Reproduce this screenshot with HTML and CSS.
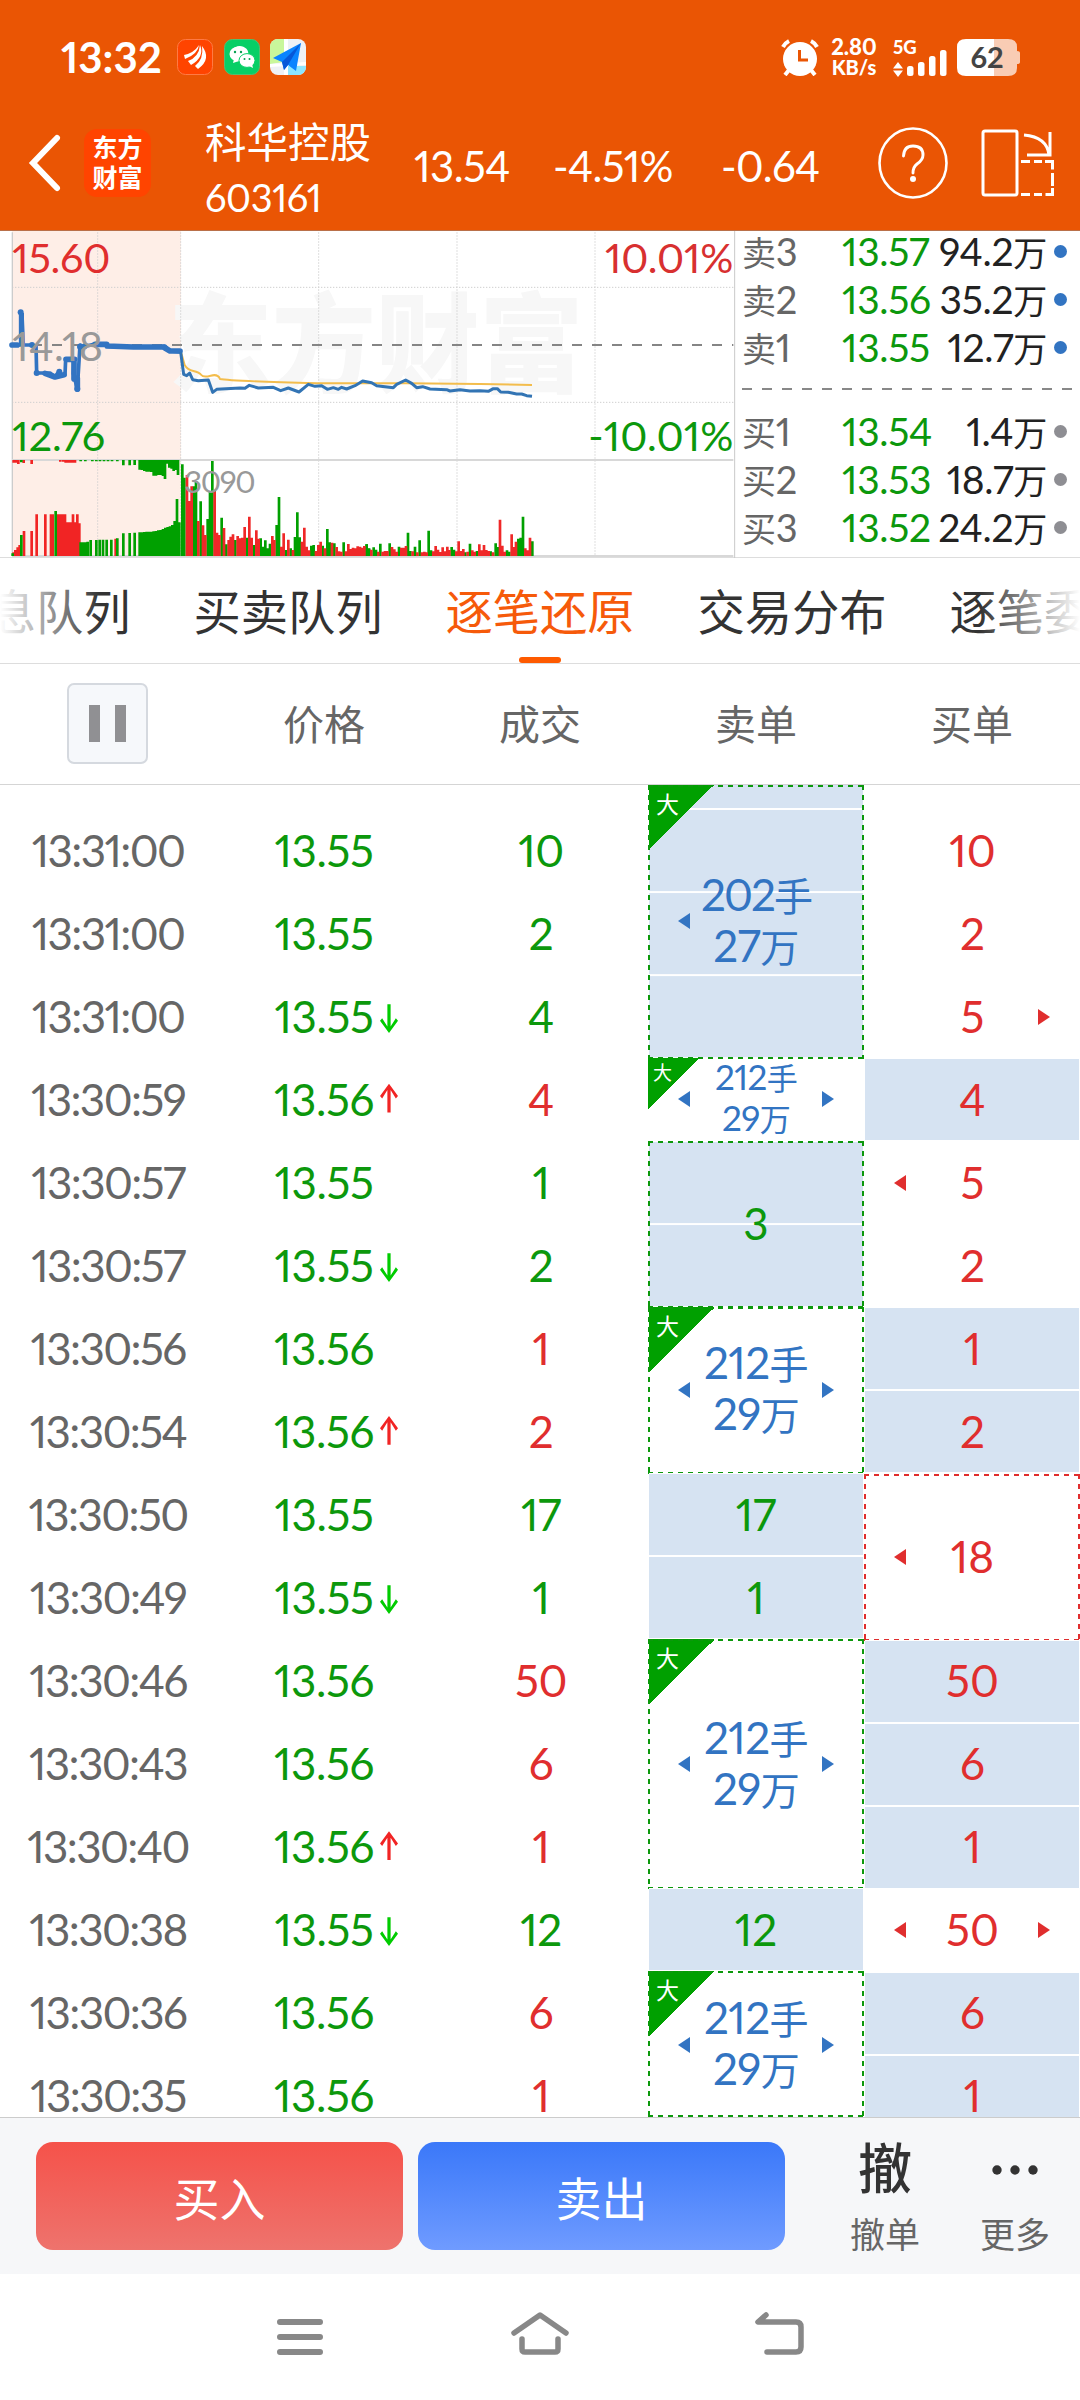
FILE: index.html
```html
<!DOCTYPE html>
<html lang="zh-CN">
<head>
<meta charset="utf-8">
<title>科华控股 603161</title>
<link rel="stylesheet" href="styles.css">
</head>
<body>
<div class="screen">
<header class="top">
  <div class="status">
    <span class="clock">13:32</span>
    <svg class="app" viewBox="0 0 36 36"><rect x=".5" y=".5" width="35" height="35" rx="8" fill="#ff4400" stroke="#ff7a45"/><path d="M7 16Q17 14 22 6Q21 15 8 20ZM11 22Q22 18 23 6Q28 18 14 26ZM18 27Q27 20 25 7Q35 20 21 30Z" fill="#fff"/></svg>
    <svg class="app" viewBox="0 0 36 36"><rect x=".5" y=".5" width="35" height="35" rx="8" fill="#07cf66" stroke="#4fc070"/><path d="M9 24l1-4A8.500 7.500 0 1 1 15 22z" fill="#fff"/><ellipse cx="14" cy="15" rx="8.500" ry="7.300" fill="#fff"/><ellipse cx="23" cy="21.500" rx="8" ry="6.900" fill="#fff" stroke="#07cf66" stroke-width="1"/><path d="M25 27l4 2-1-4z" fill="#fff"/><g fill="#07a050"><circle cx="11" cy="13" r="1.200"/><circle cx="17" cy="13" r="1.200"/><circle cx="20.500" cy="20" r="1"/><circle cx="25.500" cy="20" r="1"/></g></svg>
    <svg class="app" viewBox="0 0 36 36"><clipPath id="m"><rect width="36" height="36" rx="8"/></clipPath><g clip-path="url(#m)"><path d="M0 0h36v36H0z" fill="#eef1f5"/><path d="M0 0h14v23L0 25z" fill="#c9f79b"/><path d="M14 0h4v36h-4zM0 25l36-2v3L0 28z" fill="#fff"/><path d="M18 27h18v9H18z" fill="#8ce6ff"/><path d="M31 4L3 19l9 4 2 8 4-5 8 6z" fill="#0a84ff"/><path d="M31 4L12 23l2 8 4-5z" fill="#0758d8"/></g></svg>
    <span class="grow"></span>
    <svg class="alarm" viewBox="0 0 38 37"><g stroke="#fff" stroke-width="4" fill="none"><path d="M2 8Q4 4 8 2M30 2Q34 4 36 8M8 31l-4 5M30 31l4 5"/></g><circle cx="19" cy="20" r="17" fill="#fff"/><path d="M18.500 11v10H27" fill="none" stroke="#ea5504" stroke-width="3"/></svg>
    <span class="speed"><b>2.80</b><b>KB/s</b></span>
    <svg class="signal" viewBox="0 0 55 37"><text x="0" y="15" class="g5">5G</text><path d="M0 29.500L5 23l5 6.500zM0 31.500l5 6.500 5-6.500z" fill="#fff"/><g fill="#fff"><rect x="14" y="27" width="6.500" height="10" rx="2.500"/><rect x="25" y="23" width="6.500" height="14" rx="2.500"/><rect x="36" y="17" width="6.500" height="20" rx="2.500"/><rect x="47" y="11" width="6.500" height="26" rx="2.500"/></g></svg>
    <svg class="battery" viewBox="0 0 64 37"><path d="M36 0H51Q60 0 60 8V12Q63 12 63 14V23Q63 25 60 25V29Q60 37 51 37H36z" fill="#f9ccb4"/><path d="M9 0H37V37H9Q0 37 0 29V8Q0 0 9 0z" fill="#fff"/><text x="30" y="29" text-anchor="middle" class="pct">62</text></svg>
  </div>
  <div class="title">
    <svg class="back" viewBox="0 0 34 56"><path d="M30 3L6 28 30 53" fill="none" stroke="#fff" stroke-width="6" stroke-linecap="round" stroke-linejoin="miter"/></svg>
    <div class="logo"><span>东方</span><span>财富</span></div>
    <div class="name"><span class="cn">科华控股</span><span class="code">603161</span></div>
    <span class="q q1">13.54</span>
    <span class="q q2">-4.51%</span>
    <span class="q q3">-0.64</span>
    <svg class="help" viewBox="0 0 70 72"><ellipse cx="35" cy="36" rx="33.500" ry="34.500" fill="none" stroke="#fff" stroke-width="2.600"/><path d="M25.500 29Q26 19 35 19Q45 19 45 28Q45 33 39 37Q35 40 35 46" fill="none" stroke="#fff" stroke-width="2.900" stroke-linecap="round"/><circle cx="35" cy="52" r="3" fill="#fff"/></svg>
    <svg class="rotate" viewBox="0 0 74 70"><g fill="none" stroke="#fff" stroke-width="3"><rect x="2" y="3" width="34" height="64" rx="2"/><path d="M43 7Q66 9 68 27M69 4V27H46"/><path d="M40 33.500h9M53 33.500h8M64 33.500h7.500v8M71.500 45v13M71.500 60v6.500h-7M53 66.500h8M40 66.500h9"/></g></svg>
  </div>
</header>

<section class="market">
  <svg class="chart" viewBox="0 18 2220 981">
    <rect x="36" y="18" width="507" height="975" fill="#feeee7"/>
    <text x="505" y="476" class="wm" textLength="1245" lengthAdjust="spacingAndGlyphs">东方财富</text>
    <g fill="none" stroke="#cfcfcf" stroke-width="3" stroke-dasharray="4 5"><path d="M36 187H2200M36 532H2200M293 22V993M542 22V993M956 22V993M1371 22V993M1785 22V993"/></g>
    <path d="M37 22V993" stroke="#ccc" stroke-width="4"/>
    <path d="M36 705H2200M36 993H2200" stroke="#d8d8d8" stroke-width="6"/>
    <path d="M2204 18V999" stroke="#c9c9c9" stroke-width="3"/>
    <path d="M36 360H2200" stroke="#858585" stroke-width="6" stroke-dasharray="30 30"/>
    <g fill="none" stroke-width="8">
      <path stroke="#f12424" d="M41 993V982M46 993V975M53 993V967M59 993V960M72 993V918M95 993V918M110 993V868M136 993V868M153 993V868M158 993V868M174 993V868M181 993V868M188 993V868M195 993V868M202 993V892M209 993V892M214 993V892M219 993V868M225 993V892M232 993V868M238 993V895M347 993V941"/>
      <path stroke="#00a000" d="M38 993V985M64 993V930M167 993V858M242 993V952M249 993V952M256 993V952M263 993V950M272 993V945M289 993V945M299 993V944M309 993V944M320 993V944M334 993V944M352 993V940M370 993V925M389 993V924M404 993V923M419 993V922M426 993V922M433 993V921M440 993V920M447 993V920M454 993V920M461 993V919M468 993V918M475 993V916M482 993V915M489 993V912M496 993V908M503 993V906M510 993V904M517 993V900M524 993V888M531 993V822M538 993V892"/>
      <path stroke="#f12424" d="M41 705V713M48 705V713M55 705V717M71 705V714M95 705V717M181 705V710M190 705V710M197 705V713M204 705V713M211 705V713M218 705V713M225 705V713"/>
      <path stroke="#00a000" d="M64 705V712M242 705V709M256 705V709M277 705V709M289 705V709M300 705V709M312 705V709M324 705V709M336 705V709M352 705V709M370 705V721M389 705V721M404 705V720M419 705V734M426 705V735M433 705V738M440 705V740M447 705V740M454 705V741M461 705V752M468 705V752M475 705V750M482 705V750M489 705V753M495 705V762M502 705V716M508 705V728M515 705V731M521 705V738M528 705V735M534 705V750"/>
    </g>
    <g fill="none" stroke-width="8">
      <path stroke="#00a000" d="M547 993V718M553 993V758M582 993V784M588 993V768M602 993V829M623 993V882M630 993V800M637 993V708M665 993V878M679 993V958M706 993V945M741 993V938M762 993V960M782 993V940M789 993V965M796 993V946M803 993V970M810 993V956M830 993V900M837 993V816M858 993V975M872 993V970M885 993V936M892 993V862M899 993V937M934 993V962M941 993V960M968 993V962M982 993V912M989 993V952M1003 993V955M1031 993V952M1086 993V972M1100 993V958M1107 993V970"/>
      <path stroke="#ef2828" d="M561 993V750M568 993V828M575 993V784M595 993V888M609 993V901M616 993V930M644 993V797M651 993V923M658 993V930M672 993V909M686 993V945M692 993V935M699 993V928M713 993V933M720 993V940M727 993V938M734 993V906M748 993V875M755 993V938M769 993V916M776 993V941M817 993V933M823 993V945M844 993V965M851 993V925M865 993V944M879 993V975M906 993V950M913 993V908M920 993V965M927 993V976M948 993V978M955 993V960M962 993V950M975 993V970M996 993V953M1010 993V966M1017 993V979M1024 993V980M1038 993V979M1045 993V957M1052 993V972M1059 993V968M1066 993V970M1073 993V964M1080 993V965M1093 993V963"/>
      <path stroke="#00a000" d="M1100 993V958M1107 993V971M1121 993V967M1128 993V974M1141 993V956M1169 993V955M1197 993V965M1224 993V923M1231 993V978M1245 993V965M1259 993V946M1286 993V917M1293 993V976M1355 993V966M1362 993V974M1396 993V982M1410 993V956M1431 993V978M1472 993V979M1487 993V955M1494 993V966M1521 993V976M1528 993V980M1555 993V941M1562 993V938M1569 993V875M1597 993V949"/>
      <path stroke="#ef2828" d="M1086 993V968M1093 993V963M1114 993V974M1135 993V980M1148 993V980M1155 993V978M1162 993V978M1176 993V966M1183 993V973M1190 993V980M1204 993V968M1211 993V968M1218 993V963M1238 993V979M1252 993V982M1266 993V982M1273 993V980M1280 993V982M1300 993V979M1307 993V963M1314 993V974M1321 993V981M1328 993V967M1335 993V979M1342 993V965M1348 993V975M1369 993V979M1376 993V949M1383 993V978M1390 993V972M1403 993V980M1417 993V976M1424 993V980M1438 993V958M1445 993V976M1452 993V960M1459 993V975M1466 993V978M1479 993V982M1500 993V884M1507 993V962M1514 993V980M1535 993V928M1542 993V966M1548 993V950M1576 993V970M1583 993V976M1590 993V938"/>
    </g>
    <path d="M544 385L554 420Q562 434 580 438T604 450T632 452T660 462Q690 468 950 475L1220 475 1440 477 1596 480" fill="none" stroke="#f3bd4d" stroke-width="6"/>
    <path d="M38 360H62V262M66 270L70 360H96M108 360L110 444H150L165 455 178 438 182 450H195L197 402H223L220 445 232 492 240 360 250 365 285 357H320L322 364 400 366H480L495 363 510 378 542 381" fill="none" stroke="#3274c2" stroke-width="11" stroke-linejoin="round"/>
    <path d="M222 405V462M232 492V460M285 358H320M322 363L400 366H490L510 378H540M135 445L165 456 192 449M198 403H224M36 360H52" fill="none" stroke="#3274c2" stroke-width="17" stroke-linejoin="round" stroke-linecap="round"/>
    <path d="M66 264V360" stroke="#3274c2" stroke-width="12"/>
    <g fill="#3274c2"><circle cx="62" cy="262" r="9"/><circle cx="96" cy="360" r="9"/><circle cx="110" cy="444" r="9"/><circle cx="232" cy="492" r="9"/><circle cx="178" cy="440" r="9"/><circle cx="240" cy="365" r="9"/><circle cx="254" cy="364" r="9"/></g>
    <path d="M542 381L551 448 560 452 569 444 578 464 595 467 625 465 638 502 650 493 720 489 735 490 748 481 775 489 820 487 842 497 865 489 897 501 925 478 945 484 965 482 982 493 1000 488 1015 493 1025 487 1040 492 1065 482 1088 468 1115 473 1130 482 1180 488 1190 478 1217 465 1235 475 1250 488 1268 485 1290 492 1340 494 1350 498 1380 494 1410 498 1440 497 1465 499 1480 491 1492 491 1502 501 1525 502 1550 507 1565 507 1580 512 1596 514" fill="none" stroke="#3274b4" stroke-width="9" stroke-linejoin="round"/>
    <g class="lbl">
      <text x="37" y="143" fill="#e02e2e" textLength="294">15.60</text>
      <text x="37" y="408" fill="#999" textLength="272">14.18</text>
      <text x="37" y="677" fill="#0c980c" textLength="278">12.76</text>
      <text x="1815" y="143" fill="#d83030" textLength="385">10.01%</text>
      <text x="1765" y="677" fill="#0c980c" textLength="435">-10.01%</text>
      <text x="553" y="803" fill="#999" class="sm" textLength="214">3090</text>
    </g>
  </svg>
  <div class="book">
    <div class="lv"><span class="k">卖<i>3</i></span><span class="p">13.57</span><span class="v">94.2<em>万</em></span><span class="dot blue"></span></div>
    <div class="lv"><span class="k">卖<i>2</i></span><span class="p">13.56</span><span class="v">35.2<em>万</em></span><span class="dot blue"></span></div>
    <div class="lv"><span class="k">卖<i>1</i></span><span class="p">13.55</span><span class="v">12.7<em>万</em></span><span class="dot blue"></span></div>
    <div class="split"></div>
    <div class="lv"><span class="k">买<i>1</i></span><span class="p">13.54</span><span class="v">1.4<em>万</em></span><span class="dot"></span></div>
    <div class="lv"><span class="k">买<i>2</i></span><span class="p">13.53</span><span class="v">18.7<em>万</em></span><span class="dot"></span></div>
    <div class="lv"><span class="k">买<i>3</i></span><span class="p">13.52</span><span class="v">24.2<em>万</em></span><span class="dot"></span></div>
  </div>
</section>

<nav class="tabs">
  <span>消息队列</span><span>买卖队列</span><span class="on">逐笔还原</span><span>交易分布</span><span>逐笔委托</span>
</nav>

<div class="thead">
  <span><i class="pause"></i></span><span>价格</span><span>成交</span><span>卖单</span><span>买单</span>
</div>

<main class="ticks">
  <div class="list">
    <div class="r"><span class="t">13:31:00</span><span class="g">13.55</span><span class="g">10</span></div>
    <div class="r"><span class="t">13:31:00</span><span class="g">13.55</span><span class="g">2</span></div>
    <div class="r"><span class="t">13:31:00</span><span class="g dn">13.55</span><span class="g">4</span></div>
    <div class="r"><span class="t">13:30:59</span><span class="g up">13.56</span><span class="d">4</span></div>
    <div class="r"><span class="t">13:30:57</span><span class="g">13.55</span><span class="g">1</span></div>
    <div class="r"><span class="t">13:30:57</span><span class="g dn">13.55</span><span class="g">2</span></div>
    <div class="r"><span class="t">13:30:56</span><span class="g">13.56</span><span class="d">1</span></div>
    <div class="r"><span class="t">13:30:54</span><span class="g up">13.56</span><span class="d">2</span></div>
    <div class="r"><span class="t">13:30:50</span><span class="g">13.55</span><span class="g">17</span></div>
    <div class="r"><span class="t">13:30:49</span><span class="g dn">13.55</span><span class="g">1</span></div>
    <div class="r"><span class="t">13:30:46</span><span class="g">13.56</span><span class="d">50</span></div>
    <div class="r"><span class="t">13:30:43</span><span class="g">13.56</span><span class="d">6</span></div>
    <div class="r"><span class="t">13:30:40</span><span class="g up">13.56</span><span class="d">1</span></div>
    <div class="r"><span class="t">13:30:38</span><span class="g dn">13.55</span><span class="g">12</span></div>
    <div class="r"><span class="t">13:30:36</span><span class="g">13.56</span><span class="d">6</span></div>
    <div class="r"><span class="t">13:30:35</span><span class="g">13.56</span><span class="d">1</span></div>
  </div>
  <div class="col sell">
    <div class="c first box fill big left"><span>202<em>手</em></span><span>27<em>万</em></span></div>
    <div class="c big compact left right"><span>212<em>手</em></span><span>29<em>万</em></span></div>
    <div class="c n2 box fill g">3</div>
    <div class="c n2 box big left right"><span>212<em>手</em></span><span>29<em>万</em></span></div>
    <div class="c fill g">17</div>
    <div class="c fill g">1</div>
    <div class="c n3 box big left right"><span>212<em>手</em></span><span>29<em>万</em></span></div>
    <div class="c fill g">12</div>
    <div class="c last box big left right"><span>212<em>手</em></span><span>29<em>万</em></span></div>
  </div>
  <div class="col buy">
    <div class="c gap"></div>
    <div class="c">10</div>
    <div class="c">2</div>
    <div class="c right">5</div>
    <div class="c fill">4</div>
    <div class="c left">5</div>
    <div class="c">2</div>
    <div class="c fill">1</div>
    <div class="c fill">2</div>
    <div class="c n2 box left">18</div>
    <div class="c fill">50</div>
    <div class="c fill">6</div>
    <div class="c fill">1</div>
    <div class="c left right">50</div>
    <div class="c fill">6</div>
    <div class="c fill">1</div>
  </div>
</main>

<footer class="trade">
  <button class="btn buyb">买入</button>
  <button class="btn sellb">卖出</button>
  <div class="act"><b>撤</b><span>撤单</span></div>
  <div class="act"><svg viewBox="0 0 48 52"><g fill="#333"><circle cx="6" cy="27" r="4.700"/><circle cx="24" cy="27" r="4.700"/><circle cx="42" cy="27" r="4.700"/></g></svg><span>更多</span></div>
</footer>

<div class="sysnav">
  <svg viewBox="0 0 60 50"><path d="M10 10H50M10 25H50M10 40H50" stroke="#888" stroke-width="6" stroke-linecap="round"/></svg>
  <svg viewBox="0 0 60 50"><g fill="none" stroke="#888" stroke-width="5.500" stroke-linecap="round" stroke-linejoin="round"><path d="M4 21L30 3 56 21"/><path d="M12 27V37Q12 40 15 40H45Q48 40 48 37V27" /></g></svg>
  <svg viewBox="0 0 60 50"><path d="M16 3L8 10H46Q51 10 51 15V35Q51 40 46 40H17" fill="none" stroke="#888" stroke-width="5.500" stroke-linecap="round" stroke-linejoin="round"/></svg>
</div>
</div>
</body>
</html>
```
FILE: styles.css
```css
* { box-sizing: border-box; }
body {
  margin: 0;
  background: #fff;
  font-family: Lato, "Noto Sans CJK SC", sans-serif;
  font-feature-settings: "pnum" 1;
  line-height: 1;
}
i, em { font-style: normal; }
svg { display: block; flex: none; }
.screen { width: 1080px; height: 2400px; overflow: hidden; display: flex; flex-direction: column; }
.screen > * { flex: none; }

/* header */
.top { height: 231px; background: #ea5504; border-bottom: 1px solid #b9704a; color: #fff; }
.status { display: flex; align-items: center; height: 114px; padding: 0 59px 0 61px; }
.clock { font-size: 42px; font-weight: 700; width: 116px; }
.app { width: 36px; height: 36px; margin-right: 10.5px; }
.grow { flex: 1; }
.alarm { width: 38px; height: 37px; margin-right: 13px; }
.speed { width: 48px; margin: 0 15px 0 -2px; display: flex; flex-direction: column; align-items: center; font-size: 20px; line-height: 21px; }
.speed b { font-weight: 900; }
.speed b:first-child { font-size: 22px; }
.signal { width: 55px; height: 37px; margin-right: 9px; overflow: visible; }
.g5 { font-size: 18.5px; font-weight: 900; fill: #fff; }
.battery { width: 64px; height: 37px; }
.pct { font-size: 29px; font-weight: 700; fill: #444; }
.title { display: flex; height: 98px; align-items: center; padding-left: 27px; }
.back { width: 34px; height: 56px; margin-right: 23px; overflow: visible; }
.logo { width: 67px; height: 68px; border-radius: 13px; background: #ff4400; display: flex; flex-direction: column; align-items: center; justify-content: center; font: 700 25px/30px "Noto Sans CJK SC", sans-serif; padding-bottom: 4px; }
.name { width: 209px; margin-left: 54px; display: flex; flex-direction: column; }
.cn { font-size: 41.5px; line-height: 60px; margin-top: 5px; }
.code { font-size: 38px; line-height: 44px; margin-top: 3px; letter-spacing: -.4px; }
.q { font-size: 42px; padding-top: 5px; white-space: nowrap; letter-spacing: -.6px; }
.q1 { width: 139px; }
.q2 { width: 168px; }
.q3 { width: 157px; }
.help { width: 70px; height: 72px; margin-right: 33px; }
.rotate { width: 74px; height: 70px; }

/* intraday chart and order book */
.market { display: flex; height: 327px; border-bottom: 1px solid #ddd; }
.chart { width: 740px; height: 327px; }
.wm { font: 900 325px "Noto Sans CJK SC", sans-serif; fill: #f7f7f7; }
.lbl { font-size: 124px; }
.lbl .sm { font-size: 93px; }
.book { flex: 1; display: flex; flex-direction: column; }
.lv { display: flex; align-items: center; height: 48px; font-size: 39px; color: #222; margin-top: -4px; margin-bottom: 4px; letter-spacing: -.3px; }
.k { width: 102px; font-size: 34px; color: #666; padding-left: 2px; white-space: nowrap; }
.k i { font-size: 38px; }
.p { width: 90px; color: #0c980c; white-space: nowrap; }
.v { width: 115px; text-align: right; white-space: nowrap; }
.v em { font-size: 34px; }
.dot { width: 13px; height: 13px; border-radius: 50%; background: #8e8e93; margin-left: 7px; }
.dot.blue { background: #3274c2; }
.split { height: 36px; margin: 0 8px 0 2px; background: repeating-linear-gradient(90deg, #888 0 10px, transparent 10px 20px) 0 13px / 100% 2px no-repeat; }

/* tabs */
.tabs { display: flex; justify-content: center; height: 106px; border-bottom: 1px solid #ddd; position: relative; }
.tabs span { width: 252px; flex: none; text-align: center; font-size: 47.3px; line-height: 107px; color: #333; display: flex; flex-direction: column; align-items: center; height: 105px; }
.tabs .on { color: #f65a0a; }
.tabs .on::after { content: ""; width: 42px; height: 6px; border-radius: 3px; background: #fe5a00; margin-top: -8px; }
.tabs::after { content: ""; position: absolute; inset: 0; background: linear-gradient(90deg, #fff 0, #fff0 100px, #fff0 980px, #fff 1080px); }
.thead { display: flex; height: 121px; border-bottom: 1px solid #d5d5d5; }
.thead span { width: 216px; text-align: center; font-size: 41px; line-height: 122px; color: #666; }
.pause { display: block; width: 81px; height: 81px; margin: 19px 0 0 67px; border: 2px solid #d5d9df; border-radius: 7px; background: linear-gradient(#909093, #909093) 20px 20px / 11px 37px no-repeat, linear-gradient(#909093, #909093) 46px 20px / 11px 37px no-repeat, #f6f8fb; }

/* tick table */
.ticks { display: flex; height: 1333px; overflow: hidden; font-size: 44px; border-bottom: 1px solid #ccc; }
.list { width: 648px; padding-top: 24px; }
.r { display: flex; height: 83.07px; align-items: center; padding-bottom: 2px; letter-spacing: -.4px; }
.r span { width: 216px; text-align: center; position: relative; }
.r span:last-child { left: 1px; }
.r .t { color: #666; letter-spacing: -1.6px; }
.g { color: #0c980c; }
.d { color: #e02e2e; }
.up::after, .dn::after { content: ""; position: absolute; left: 164px; top: 7px; width: 18px; height: 32px; background: #f12424; clip-path: polygon(50% 0, 100% 38%, 88% 46%, 59% 20%, 59% 90%, 41% 90%, 41% 20%, 12% 46%, 0 38%); }
.dn::after { background: #00cc00; transform: rotate(180deg); }
.col { width: 216px; color: #e02e2e; }
.sell { color: #0c980c; }
.c { height: 83.07px; display: flex; flex-direction: column; align-items: center; justify-content: center; position: relative; padding-bottom: 1px; }
.buy .c { padding-left: 1px; padding-bottom: 2px; }
.c.gap { height: 24px; }
.c.first { height: 272.5px; padding: 0; }
.c.n2 { height: 166.14px; }
.c.n3 { height: 249.2px; padding: 0; }
.c.last { height: 147px; padding: 0 0 1px; }
.c.fill { background: linear-gradient(#fff 0 1px, #d6e3f2 1px calc(100% - 1px), #fff calc(100% - 1px)) 1px 0 / 214px 83.07px repeat-y; }
.c.box::before {
  content: ""; position: absolute; inset: 0 0 -1px 0;
  --h: repeating-linear-gradient(90deg, var(--k) 0 5px, transparent 5px 10px);
  --v: repeating-linear-gradient(var(--k) 0 5px, transparent 5px 10px);
  --k: #0c980c;
  background: var(--h) 0 0 / 100% 2px no-repeat, var(--h) 0 100% / 100% 2px no-repeat, var(--v) 0 0 / 2px 100% no-repeat, var(--v) 100% 0 / 2px 100% no-repeat;
}
.buy .box::before { --k: #e02e2e; }
.c.last::before { inset: 0 0 1px; }
.big { color: #3274c2; line-height: 49px; letter-spacing: -.6px; }
.big em { font-size: 39px; }
.first span:first-child { letter-spacing: -2px; }
.sell .big { background-image: linear-gradient(135deg, #00a000 50%, transparent 50%); background-size: 66px 66px; background-position: 1px 0; background-repeat: no-repeat; }
.sell .big.fill { background: linear-gradient(135deg, #00a000 50%, transparent 50%) 1px -1px / 66px 66px no-repeat, linear-gradient(#fff 0 1px, #d6e3f2 1px calc(100% - 1px), #fff calc(100% - 1px)) 1px 24px / 214px 83.07px repeat-y; }
.sell .big.compact { background-size: 53px 53px; background-position: 0 -1px; font-size: 35px; line-height: 39px; padding-bottom: 2px; }
.sell .compact em { font-size: 31px; }
.sell .big::after { content: "大"; position: absolute; left: 8px; top: 8px; font-size: 23px; line-height: 23px; color: #fff; }
.sell .compact::after { font-size: 19px; left: 5px; top: 3px; }
.left span:first-child::before, .buy .left::after { content: ""; position: absolute; left: 30px; top: calc(50% - 8px); border: 8.500px solid transparent; border-left: 0; border-right: 12px solid currentColor; }
.right span:last-child::before, .buy .right::before { content: ""; position: absolute; left: 174px; top: calc(50% - 8px); border: 8.500px solid transparent; border-right: 0; border-left: 12px solid currentColor; }

/* trade bar */
.trade { display: flex; height: 156px; background: #f6f7f9; padding: 25px 0 0 36px; }
.btn { width: 367px; height: 108px; margin: -1px 15px 0 0; border: 0; border-radius: 17px; color: #fff; font: 46px/106px "Noto Sans CJK SC", sans-serif; padding: 0; }
.buyb { background: linear-gradient(#f5524a, #ee736d); }
.sellb { background: linear-gradient(#3a78f9, #6f9bff); }
.act { width: 130px; display: flex; flex-direction: column; align-items: center; font-size: 35px; color: #666; }
.act b { font-size: 54px; line-height: 52px; font-weight: 500; color: #333; }
.act svg { width: 48px; height: 52px; }
.act span { margin-top: 21px; line-height: 36px; }
.act:nth-child(3) { margin-left: 20px; }
.sysnav { flex: 1; display: flex; justify-content: center; gap: 180px; padding-top: 38px; }
.sysnav svg { width: 60px; height: 50px; }
```
